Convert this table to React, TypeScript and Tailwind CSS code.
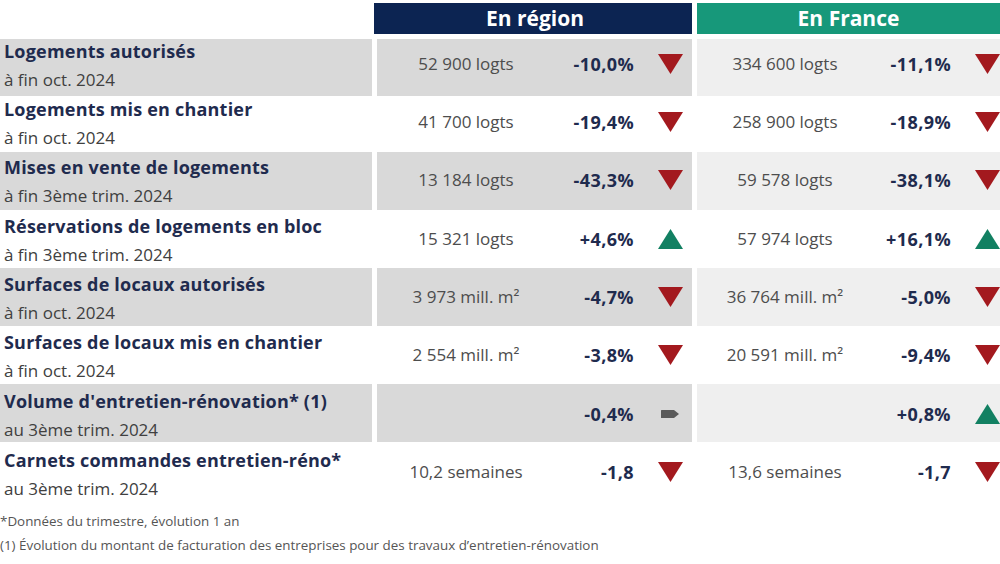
import React from "react";

type Trend = "down" | "up" | "flat";
type Cell = { value: string; pct: string; trend: Trend };
type Row = { title: string; sub: string; h: string; tp: string; dp: string; region: Cell; france: Cell };

const rows: Row[] = [
  { title: "Logements autorisés", sub: "à fin oct. 2024", h: "h-[57px]", tp: "pt-0", dp: "pt-[13px]", region: { value: "52 900 logts", pct: "-10,0%", trend: "down" }, france: { value: "334 600 logts", pct: "-11,1%", trend: "down" } },
  { title: "Logements mis en chantier", sub: "à fin oct. 2024", h: "h-[56px]", tp: "pt-[1px]", dp: "pt-[14px]", region: { value: "41 700 logts", pct: "-19,4%", trend: "down" }, france: { value: "258 900 logts", pct: "-18,9%", trend: "down" } },
  { title: "Mises en vente de logements", sub: "à fin 3ème trim. 2024", h: "h-[58px]", tp: "pt-[3px]", dp: "pt-[16px]", region: { value: "13 184 logts", pct: "-43,3%", trend: "down" }, france: { value: "59 578 logts", pct: "-38,1%", trend: "down" } },
  { title: "Réservations de logements en bloc", sub: "à fin 3ème trim. 2024", h: "h-[58px]", tp: "pt-[4px]", dp: "pt-[17px]", region: { value: "15 321 logts", pct: "+4,6%", trend: "up" }, france: { value: "57 974 logts", pct: "+16,1%", trend: "up" } },
  { title: "Surfaces de locaux autorisés", sub: "à fin oct. 2024", h: "h-[58px]", tp: "pt-[4px]", dp: "pt-[17px]", region: { value: "3 973 mill. m²", pct: "-4,7%", trend: "down" }, france: { value: "36 764 mill. m²", pct: "-5,0%", trend: "down" } },
  { title: "Surfaces de locaux mis en chantier", sub: "à fin oct. 2024", h: "h-[58px]", tp: "pt-[4px]", dp: "pt-[17px]", region: { value: "2 554 mill. m²", pct: "-3,8%", trend: "down" }, france: { value: "20 591 mill. m²", pct: "-9,4%", trend: "down" } },
  { title: "Volume d'entretien-rénovation* (1)", sub: "au 3ème trim. 2024", h: "h-[58px]", tp: "pt-[5px]", dp: "pt-[18px]", region: { value: "", pct: "-0,4%", trend: "flat" }, france: { value: "", pct: "+0,8%", trend: "up" } },
  { title: "Carnets commandes entretien-réno*", sub: "au 3ème trim. 2024", h: "h-[58px]", tp: "pt-[6px]", dp: "pt-[18px]", region: { value: "10,2 semaines", pct: "-1,8", trend: "down" }, france: { value: "13,6 semaines", pct: "-1,7", trend: "down" } },
];

function Arrow({ trend }: { trend: Trend }) {
  if (trend === "down")
    return (
      <svg width="25" height="20" viewBox="0 0 25 20" className="shrink-0">
        <polygon points="0,0 25,0 12.5,20" fill="#a3191e" />
      </svg>
    );
  if (trend === "up")
    return (
      <svg width="25" height="20" viewBox="0 0 25 20" className="shrink-0">
        <polygon points="0,20 25,20 12.5,0" fill="#128062" />
      </svg>
    );
  return (
    <svg width="25" height="20" viewBox="0 0 25 20" className="shrink-0">
      <path d="M3,6.5 Q3,6 3.5,6 L16,6 L21,10 L16,14 L3.5,14 Q3,14 3,13.5 Z" fill="#5a5a5a" />
    </svg>
  );
}

function DataCell({ c, gray, light, pad }: { c: Cell; gray: boolean; light?: boolean; pad: string }) {
  const bg = gray ? (light ? "bg-[#efefef]" : "bg-[#d9d9d9]") : "bg-white";
  return (
    <div className={`${bg} ${pad}`}>
      <div className="flex items-center h-[24px]">
        <div className="w-[178px] text-center text-[17px] text-[#4d4d4d] whitespace-nowrap">{c.value}</div>
        <div className="w-[79px] text-right text-[18px] font-bold text-[#1f2b4e] tracking-[0.4px] whitespace-nowrap">{c.pct}</div>
        <div className="ml-[24px]">
          <Arrow trend={c.trend} />
        </div>
      </div>
    </div>
  );
}

export default function App() {
  return (
    <div className="w-[1000px] h-[564px] bg-white overflow-hidden" style={{ fontFamily: '"Open Sans", "Noto Sans", sans-serif' }}>
      <div className="grid grid-cols-[372px_315px_303px] gap-x-[5px] pt-[3px]">
        <div className="h-[31px]" />
        <div className="h-[31px] bg-[#0c2452] text-white font-bold text-[21px] flex items-center justify-center -ml-[3px] pl-[4px]">En région</div>
        <div className="h-[31px] bg-[#17987a] text-white font-bold text-[21px] flex items-center justify-center">En France</div>
      </div>
      <div className="grid grid-cols-[372px_315px_303px] gap-x-[5px] mt-[5px]">
        {rows.map((r, i) => {
          const gray = i % 2 === 0;
          return (
            <React.Fragment key={i}>
              <div className={`${gray ? "bg-[#d9d9d9]" : "bg-white"} ${r.h} ${r.tp} pl-[4px] whitespace-nowrap`}>
                <div className="text-[18px] font-bold text-[#1f2b4e] leading-[24px] tracking-[0.2px]">{r.title}</div>
                <div className="mt-[5px] text-[17px] text-[#404040] leading-[24px]">{r.sub}</div>
              </div>
              <DataCell c={r.region} gray={gray} pad={r.dp} />
              <DataCell c={r.france} gray={gray} light pad={r.dp} />
            </React.Fragment>
          );
        })}
      </div>
      <div className="mt-[9px] text-[13.4px] text-[#555] leading-[24px] whitespace-nowrap">
        <div>*Données du trimestre, évolution 1 an</div>
        <div>(1) Évolution du montant de facturation des entreprises pour des travaux d’entretien-rénovation</div>
      </div>
    </div>
  );
}
